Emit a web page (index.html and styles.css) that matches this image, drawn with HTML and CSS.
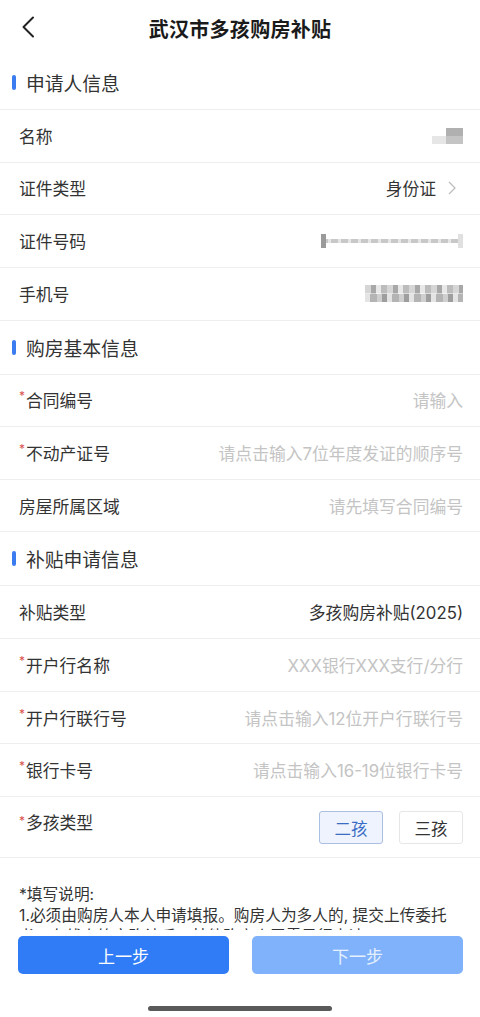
FILE: index.html
```html
<!DOCTYPE html>
<html lang="zh-CN">
<head>
<meta charset="utf-8">
<title>武汉市多孩购房补贴</title>
<link rel="stylesheet" href="styles.css">
</head>
<body>
<div class="page">
  <header class="topbar">
    <svg class="back" width="14" height="22" viewBox="0 0 14 22"><path d="M12 1.5 L2.5 11 L12 20.5" fill="none" stroke="#222" stroke-width="2" stroke-linecap="round" stroke-linejoin="round"/></svg>
    <h1 class="title">武汉市多孩购房补贴</h1>
  </header>

  <main class="content">
    <section class="group">
      <div class="group-head"><span class="bar"></span>申请人信息</div>
      <div class="row"><span class="label">名称</span><span class="mask mask-name"></span></div>
      <div class="row"><span class="label">证件类型</span><span class="value">身份证<svg class="arrow" width="8" height="14" viewBox="0 0 8 14"><path d="M1 1 L7 7 L1 13" fill="none" stroke="#bdbdbd" stroke-width="1.3"/></svg></span></div>
      <div class="row"><span class="label">证件号码</span><span class="mask mask-id"></span></div>
      <div class="row"><span class="label">手机号</span><span class="mask mask-phone"></span></div>
    </section>

    <section class="group">
      <div class="group-head"><span class="bar"></span>购房基本信息</div>
      <div class="row"><span class="label"><i class="req">*</i>合同编号</span><span class="value placeholder">请输入</span></div>
      <div class="row"><span class="label"><i class="req">*</i>不动产证号</span><span class="value placeholder">请点击输入7位年度发证的顺序号</span></div>
      <div class="row"><span class="label">房屋所属区域</span><span class="value placeholder">请先填写合同编号</span></div>
    </section>

    <section class="group">
      <div class="group-head"><span class="bar"></span>补贴申请信息</div>
      <div class="row"><span class="label">补贴类型</span><span class="value">多孩购房补贴(2025)</span></div>
      <div class="row"><span class="label"><i class="req">*</i>开户行名称</span><span class="value placeholder">XXX银行XXX支行/分行</span></div>
      <div class="row"><span class="label"><i class="req">*</i>开户行联行号</span><span class="value placeholder">请点击输入12位开户行联行号</span></div>
      <div class="row"><span class="label"><i class="req">*</i>银行卡号</span><span class="value placeholder">请点击输入16-19位银行卡号</span></div>
      <div class="row row-choice">
        <span class="label"><i class="req">*</i>多孩类型</span>
        <div class="choices">
          <span class="choice active">二孩</span>
          <span class="choice">三孩</span>
        </div>
      </div>
    </section>

    <div class="notes">
      <p>*填写说明:</p>
      <p>1.必须由购房人本人申请填报。购房人为多人的, 提交上传委托</p>
      <p>书，在线上签字确认后，其他购房人无需另行申请。</p>
    </div>
  </main>

  <footer class="footer">
    <div class="actions">
      <button class="btn btn-primary">上一步</button>
      <button class="btn btn-disabled">下一步</button>
    </div>
    <div class="home-area"><span class="home-bar"></span></div>
  </footer>
</div>
</body>
</html>
```

FILE: styles.css
```css
* { box-sizing: border-box; margin: 0; padding: 0; }

html, body {
  width: 480px;
  height: 1017px;
  background: #fff;
  overflow: hidden;
}

body {
  font-family: Inter, "Noto Sans CJK SC", "Noto Sans", sans-serif;
  color: #333;
}

.page {
  height: 1017px;
  display: flex;
  flex-direction: column;
}

.topbar {
  height: 56px;
  flex: none;
  display: flex;
  align-items: center;
  justify-content: center;
  position: relative;
}

.back {
  position: absolute;
  left: 21px;
  top: 16px;
}

.title {
  font-family: "Noto Sans CJK SC", sans-serif;
  font-size: 20px;
  font-weight: 700;
  color: #1a1a1a;
  letter-spacing: 0.3px;
}

.content {
  flex: 1;
  min-height: 0;
  overflow: hidden;
}

.group-head {
  height: 54px;
  display: flex;
  align-items: center;
  padding-left: 12px;
  font-size: 18.8px;
  color: #333;
  border-bottom: 1px solid #eeeeee;
}

.bar {
  width: 4px;
  height: 15px;
  border-radius: 2px;
  background: #3b7cf0;
  margin-right: 10px;
}

.row {
  height: 52.65px;
  display: flex;
  align-items: center;
  justify-content: space-between;
  padding: 0 17px 0 19px;
  border-bottom: 1px solid #eeeeee;
  font-size: 16.8px;
}

.label {
  display: flex;
  align-items: center;
  color: #333;
  white-space: nowrap;
}

.req {
  font-style: normal;
  color: #d9534f;
  font-size: 12px;
  line-height: 1;
  width: 7px;
  align-self: flex-start;
  margin-top: 2px;
}

.value {
  display: flex;
  align-items: center;
  color: #333;
  white-space: nowrap;
}

.placeholder {
  color: #c4c4c4;
}

.arrow {
  margin-left: 12px;
  margin-right: 7px;
}

.mask {
  display: block;
  filter: blur(0.7px);
}

.mask-name {
  width: 31px;
  height: 16px;
  background:
    linear-gradient(to right, transparent 0 45%, #b0b0b0 45% 100%) 0 0 / 100% 50% no-repeat,
    linear-gradient(to right, #e6e6e6 0 45%, #c4c4c4 45% 100%) 0 100% / 100% 50% no-repeat;
}

.mask-id {
  width: 142px;
  height: 14px;
  background:
    linear-gradient(to right, #9a9a9a 0 5px, transparent 5px calc(100% - 5px), #e0e0e0 calc(100% - 5px)) 0 0 / 100% 100% no-repeat,
    repeating-linear-gradient(to right, #c8c8c8 0 7px, #e6e6e6 7px 10px) 0 5px / 100% 4px no-repeat;
}

.mask-phone {
  width: 98px;
  height: 17px;
  background:
    repeating-linear-gradient(to right, #d6d6d6 0 6px, #a8a8a8 6px 11px, #e8e8e8 11px 16px, #bcbcbc 16px 22px) 0 0 / 100% 50% no-repeat,
    repeating-linear-gradient(to right, #e4e4e4 0 5px, #b4b4b4 5px 12px, #cfcfcf 12px 17px, #9e9e9e 17px 22px) 0 100% / 100% 50% no-repeat;
}

.row-choice {
  height: 61px;
  align-items: flex-start;
  padding-top: 14px;
}

.row-choice .label {
  line-height: 24px;
}

.row-choice .req {
  margin-top: 4px;
}

.choices {
  display: flex;
  gap: 16px;
}

.choice {
  width: 64px;
  height: 33px;
  display: flex;
  align-items: center;
  justify-content: center;
  border: 1px solid #e6e6e6;
  border-radius: 3px;
  font-size: 16.5px;
  color: #333;
  background: #fff;
}

.choice.active {
  background: #eef3fd;
  border-color: #aabfe2;
  color: #3a6cc4;
}

.notes {
  padding: 26px 19px 0;
  font-size: 15.7px;
  line-height: 21px;
  color: #333;
  white-space: nowrap;
}

.footer {
  flex: none;
  height: 87px;
  background: #fff;
  display: flex;
  flex-direction: column;
  padding-top: 6px;
}

.actions {
  display: flex;
  gap: 23px;
  padding: 0 17px 0 18px;
}

.btn {
  flex: 1;
  height: 38px;
  border: none;
  border-radius: 5px;
  font-family: "Noto Sans CJK SC", "Noto Sans", sans-serif;
  font-size: 17px;
  color: #fff;
}

.btn-primary {
  background: #2f7cf6;
}

.btn-disabled {
  background: #7fb2fa;
  color: #e6f0fe;
}

.home-area {
  flex: 1;
  display: flex;
  justify-content: center;
  align-items: flex-end;
  padding-bottom: 6px;
}

.home-bar {
  width: 184px;
  height: 5px;
  border-radius: 3px;
  background: #5a5a5a;
}
```
